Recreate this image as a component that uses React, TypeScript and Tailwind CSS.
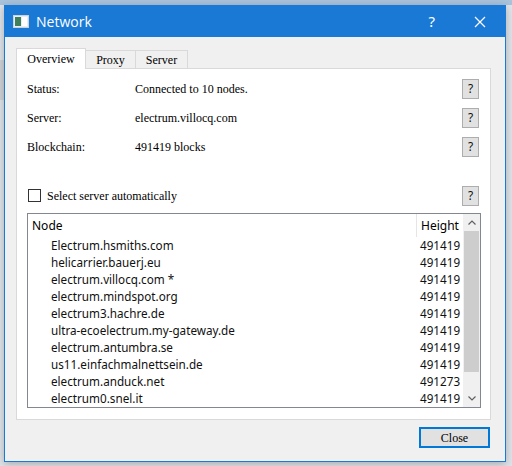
import React from 'react'

const serif = { fontFamily: '"Liberation Serif", "Times New Roman", serif' }
const sans = { fontFamily: '"Noto Sans", "Open Sans", sans-serif' }

const nodes: [string, string][] = [
  ['Electrum.hsmiths.com', '491419'],
  ['helicarrier.bauerj.eu', '491419'],
  ['electrum.villocq.com *', '491419'],
  ['electrum.mindspot.org', '491419'],
  ['electrum3.hachre.de', '491419'],
  ['ultra-ecoelectrum.my-gateway.de', '491419'],
  ['electrum.antumbra.se', '491419'],
  ['us11.einfachmalnettsein.de', '491419'],
  ['electrum.anduck.net', '491273'],
  ['electrum0.snel.it', '491419'],
]

function HelpButton() {
  return (
    <button
      className="flex h-[20px] w-[17px] items-center justify-center border border-[#adadad] bg-[#e1e1e1] text-[12px] text-[#111]"
      style={sans}
    >
      ?
    </button>
  )
}

function InfoRow({ label, value }: { label: string; value: string }) {
  return (
    <div className="flex h-[29px] items-center">
      <span className="w-[108px] text-[12px] text-black" style={serif}>
        {label}
      </span>
      <span className="flex-1 text-[12px] text-black" style={serif}>
        {value}
      </span>
      <HelpButton />
    </div>
  )
}

export default function App() {
  return (
    <div className="relative h-[466px] w-[512px] overflow-hidden bg-[#dfe4ea]">
      {/* bits of the window behind */}
      <div className="absolute left-0 top-0 h-[5px] w-[512px] bg-[#a9c3dc]" />
      <div className="absolute left-0 top-[60px] h-[40px] w-[4px] bg-[#cfd3d8]" />

      <div className="absolute left-[4px] top-[5px] flex h-[457px] w-[502px] flex-col border border-[#1979d4] bg-[#f0f0f0] shadow-[0_2px_8px_rgba(0,0,0,0.25)]">
        {/* title bar */}
        <div className="flex h-[31px] shrink-0 items-center bg-[#1979d4] pl-[8px] text-white">
          <svg width="16" height="13" viewBox="0 0 16 13" className="mr-[7px]">
            <rect x="0.5" y="0.5" width="15" height="12" fill="#e8eef4" stroke="#c9d3dd" />
            <rect x="2" y="2" width="6" height="9" fill="#3f7f5a" />
            <rect x="9" y="2" width="5" height="9" fill="#ffffff" />
          </svg>
          <span className="text-[14px]" style={{ fontFamily: '"Open Sans", "Noto Sans", sans-serif' }}>
            Network
          </span>
          <div className="flex-1" />
          <span className="mr-[39px] text-[15px]" style={sans}>
            ?
          </span>
          <svg width="12" height="12" viewBox="0 0 12 12" className="mr-[19px]">
            <path d="M1 1 L11 11 M11 1 L1 11" stroke="white" strokeWidth="1.2" />
          </svg>
        </div>

        <div className="flex flex-1 flex-col px-[11px] pt-[11px]">
          {/* tabs */}
          <div className="flex h-[20px] items-end" style={serif}>
            <div className="relative z-10 -mb-px flex h-[21px] w-[70px] items-center justify-center border border-b-0 border-[#d9d9d9] bg-white text-[12px]">
              Overview
            </div>
            <div className="flex h-[18px] w-[50px] items-center justify-center border border-l-0 border-b-0 border-[#d9d9d9] bg-[#f0f0f0] text-[12px]">
              Proxy
            </div>
            <div className="flex h-[18px] w-[52px] items-center justify-center border border-l-0 border-b-0 border-[#d9d9d9] bg-[#f0f0f0] text-[12px]">
              Server
            </div>
          </div>

          {/* tab pane */}
          <div className="flex h-[352px] w-[475px] flex-col border border-[#d9d9d9] bg-white pl-[10px] pr-[11px] pt-[5px]">
            <InfoRow label="Status:" value="Connected to 10 nodes." />
            <InfoRow label="Server:" value="electrum.villocq.com" />
            <InfoRow label="Blockchain:" value="491419 blocks" />

            <div className="mt-[20px] flex h-[29px] items-center">
              <span className="ml-[1px] mr-[6px] h-[13px] w-[13px] border border-[#333] bg-white" />
              <span className="flex-1 text-[12px] text-black" style={serif}>
                Select server automatically
              </span>
              <HelpButton />
            </div>

            {/* tree */}
            <div className="mt-[3px] flex h-[195px] w-[454px] border border-[#828790] bg-white" style={sans}>
              <div className="flex flex-1 flex-col overflow-hidden">
                <div className="flex h-[23px] shrink-0 items-center text-[12px] text-black">
                  <span className="flex-1 pl-[4px]">Node</span>
                  <span className="flex h-full w-[47px] items-center border-l border-[#e5e5e5] pl-[4px]">Height</span>
                </div>
                {nodes.map(([n, h]) => (
                  <div key={n} className="flex h-[17px] shrink-0 items-center text-[11.7px] text-[#111]">
                    <span className="flex-1 pl-[23px]">{n}</span>
                    <span className="w-[47px] pl-[4px]">{h}</span>
                  </div>
                ))}
              </div>
              {/* scrollbar */}
              <div className="flex w-[17px] shrink-0 flex-col bg-[#f0f0f0]">
                <div className="flex h-[17px] items-center justify-center">
                  <svg width="8" height="5" viewBox="0 0 8 5">
                    <path d="M0.5 4.5 L4 1 L7.5 4.5" fill="none" stroke="#606060" strokeWidth="1.2" />
                  </svg>
                </div>
                <div className="mx-[1px] h-[141px] bg-[#cdcdcd]" />
                <div className="flex-1" />
                <div className="flex h-[17px] items-center justify-center">
                  <svg width="8" height="5" viewBox="0 0 8 5">
                    <path d="M0.5 0.5 L4 4 L7.5 0.5" fill="none" stroke="#606060" strokeWidth="1.2" />
                  </svg>
                </div>
              </div>
            </div>
          </div>

          {/* footer */}
          <div className="flex flex-1 items-start justify-end pr-[4px] pt-[7px]">
            <button
              className="flex h-[21px] w-[71px] items-center justify-center border-2 border-[#0078d7] bg-[#e1e1e1] text-[12px] text-black"
              style={serif}
            >
              Close
            </button>
          </div>
        </div>
      </div>
    </div>
  )
}
